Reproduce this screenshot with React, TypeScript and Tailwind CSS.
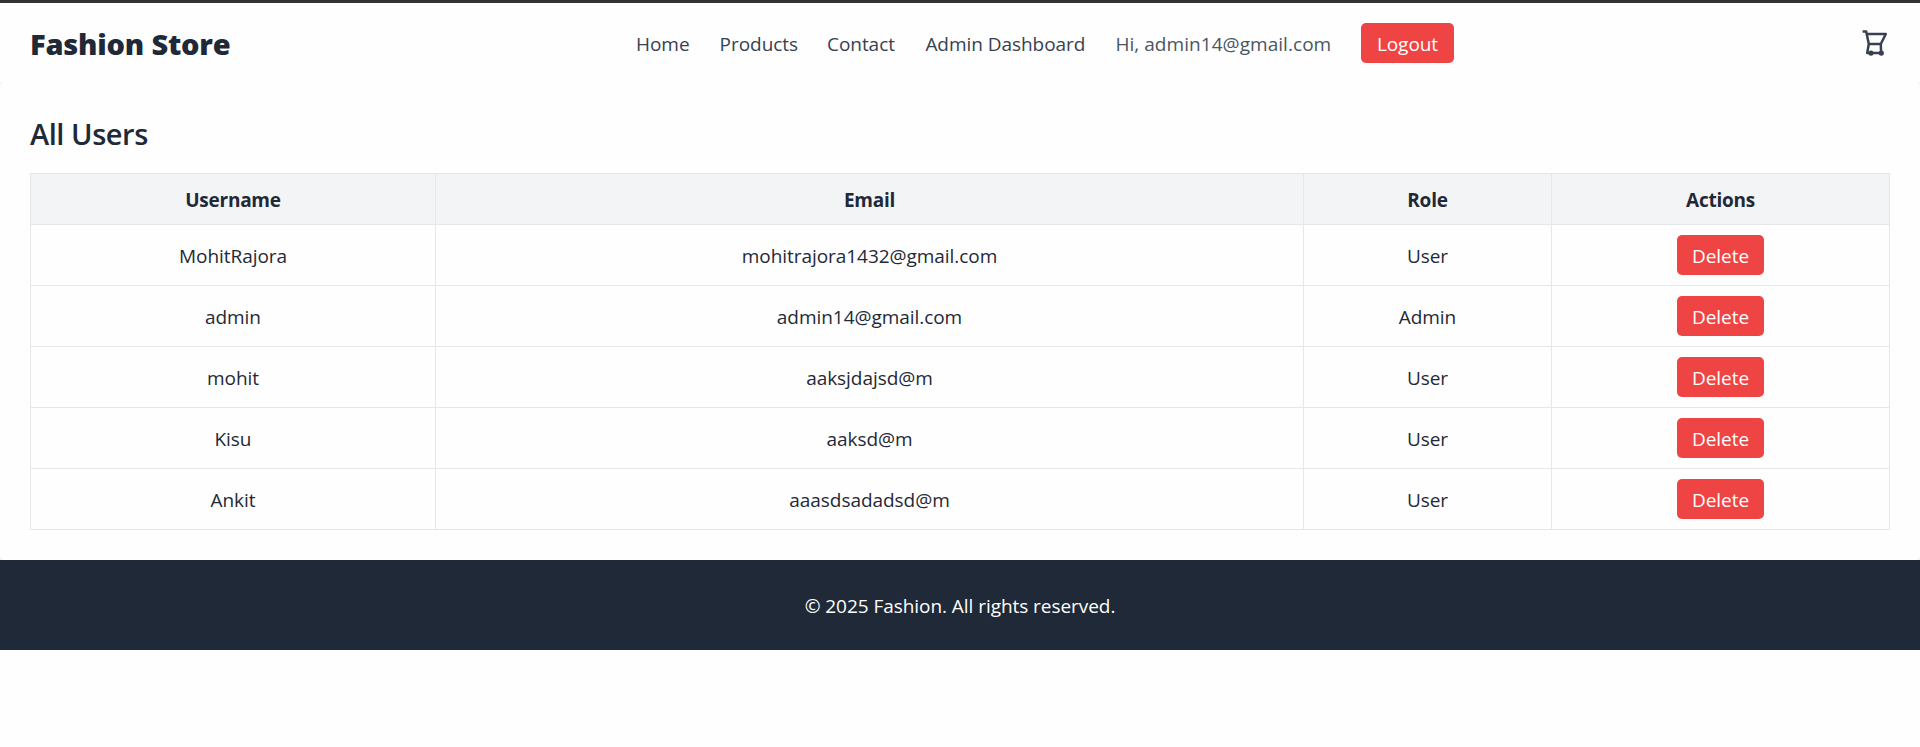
const users = [
  { name: 'MohitRajora', email: 'mohitrajora1432@gmail.com', role: 'User' },
  { name: 'admin', email: 'admin14@gmail.com', role: 'Admin' },
  { name: 'mohit', email: 'aaksjdajsd@m', role: 'User' },
  { name: 'Kisu', email: 'aaksd@m', role: 'User' },
  { name: 'Ankit', email: 'aaasdsadadsd@m', role: 'User' },
];

function CartIcon() {
  return (
    <svg width="30" height="30" viewBox="0 0 30 30" fill="none" stroke="#374151" strokeWidth="2.5" strokeLinejoin="round">
      <path d="M2.6 3.5h3.6L8.8 16 7.2 25h15M6.6 6h19.2L20.8 16H8.8M20.8 16l.3 9" />
      <circle cx="11" cy="25.1" r="1.4" fill="#374151" />
      <circle cx="21.3" cy="25.1" r="1.4" fill="#374151" />
    </svg>
  );
}

export default function App() {
  return (
    <div className="h-[747px] overflow-hidden bg-[#fefefe] font-['Open_Sans','Noto_Sans',sans-serif] text-[19px] leading-[30px] tracking-[-0.05px] text-gray-800">
      <div className="h-[3px] bg-[#333336]" />
      <header className="flex h-[79px] items-start justify-between px-[30px] pt-5">
        <div className="w-[199px] pt-0.5 text-[29px] leading-[38px] font-extrabold tracking-[-0.2px] whitespace-nowrap text-[#1f2937]">Fashion Store</div>
        <nav className="flex items-center gap-[30px] text-center whitespace-nowrap text-[#374151]">
          <a className="w-[53.6px] pt-px pl-px">Home</a>
          <a className="w-[77.4px] pt-px pl-px">Products</a>
          <a className="w-[68.4px] pt-px pl-px">Contact</a>
          <a className="w-[160px] pt-px pl-px">Admin Dashboard</a>
          <span className="w-[216.6px] pt-px pl-px tracking-[0.05px] text-[#4b5563]">Hi, admin14@gmail.com</span>
          <button className="h-10 w-[93px] rounded-[5px] bg-[#ef4444] pt-px text-white">Logout</button>
        </nav>
        <div className="flex w-[30px] justify-end pt-[5px]"><CartIcon /></div>
      </header>
      <div className="bg-[#f3f4f6]">
        <main className="h-[478px] rounded-[5px] bg-[#fefefe] px-[30px] pt-[30px]">
          <h2 className="h-[61px] pt-[3px] text-[29px] leading-[38px] font-semibold tracking-[-0.45px] text-[#1f2937]">All Users</h2>
          <table className="w-[1860px] table-fixed border-collapse text-center text-[#1f2937]">
            <colgroup>
              <col className="w-[405px]" />
              <col className="w-[868px]" />
              <col className="w-[248px]" />
              <col className="w-[338px]" />
            </colgroup>
            <thead>
              <tr className="h-[51px] bg-[#f3f4f6]">
                {['Username', 'Email', 'Role', 'Actions'].map((h) => (
                  <th key={h} className="border border-[#e5e7eb] p-0 pt-0.5 font-bold tracking-[-0.25px]">{h}</th>
                ))}
              </tr>
            </thead>
            <tbody>
              {users.map((u) => (
                <tr key={u.name} className="h-[61px]">
                  <td className="border border-[#e5e7eb] p-0 pt-0.5">{u.name}</td>
                  <td className="border border-[#e5e7eb] p-0 pt-0.5">{u.email}</td>
                  <td className="border border-[#e5e7eb] p-0 pt-0.5">{u.role}</td>
                  <td className="border border-[#e5e7eb] p-0">
                    <button className="mx-auto block h-10 w-[87px] rounded-[5px] bg-[#ef4444] pt-0.5 text-white">Delete</button>
                  </td>
                </tr>
              ))}
            </tbody>
          </table>
        </main>
      </div>
      <footer className="flex h-[90px] items-center justify-center bg-[#1f2937] pt-0.5 text-white">
        © 2025 Fashion. All rights reserved.
      </footer>
    </div>
  );
}
